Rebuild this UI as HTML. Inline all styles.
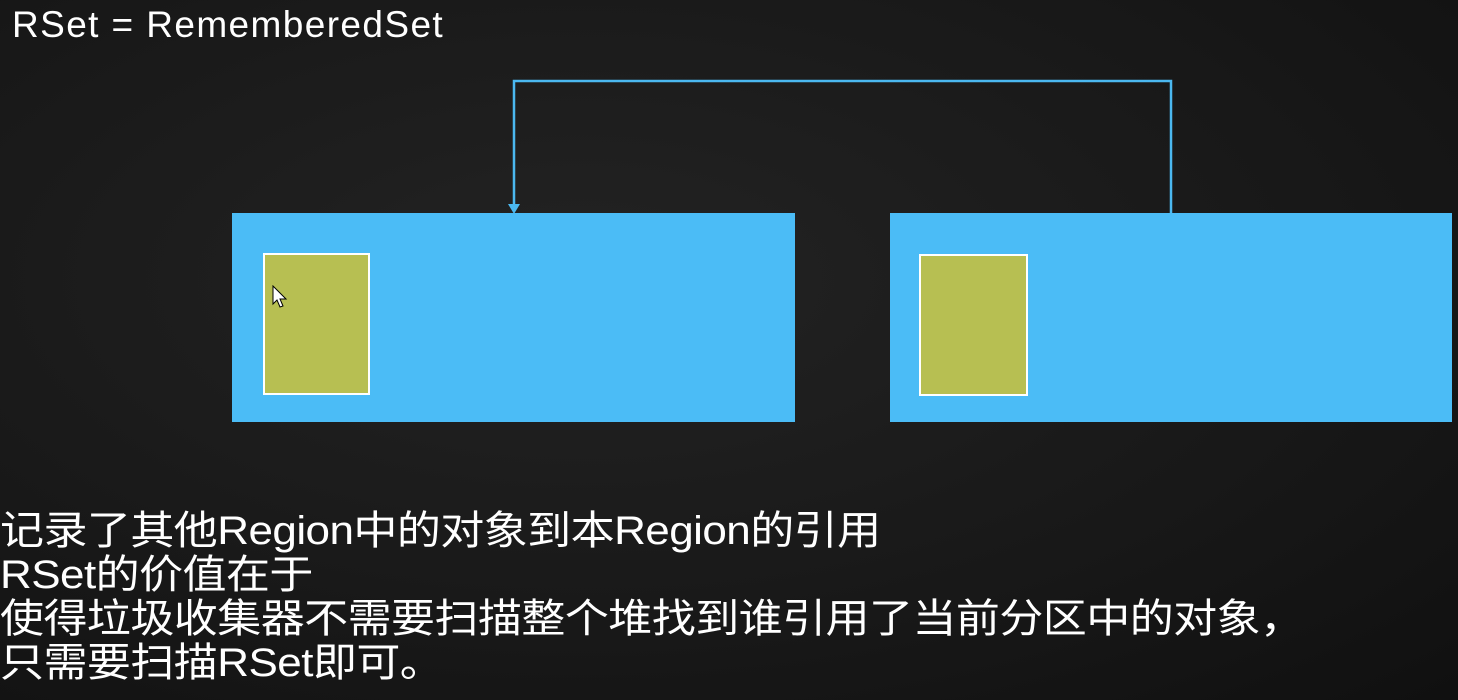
<!DOCTYPE html>
<html><head><meta charset="utf-8"><style>
html,body{margin:0;padding:0}
body{width:1458px;height:700px;overflow:hidden;position:relative;background:radial-gradient(ellipse at 40% 40%,#232323 0%,#181818 60%,#101010 100%);font-family:"Liberation Sans","Noto Sans CJK SC",sans-serif;color:#fff}
.t{position:absolute;left:12px;top:3px;font-size:37px;line-height:44px;white-space:nowrap;letter-spacing:1.4px}
.box{position:absolute;background:#4bbcf6;top:213px;height:209px}
.ol{position:absolute;background:#b7bf52;border:2px solid #fff;box-sizing:border-box}
.txt{position:absolute;left:0;top:509px;font-size:40px;line-height:44px;white-space:nowrap;letter-spacing:-0.5px}
.txt span{display:inline-block;transform-origin:0 0;transform:scaleX(1.1)}
</style></head><body>
<div class="t">RSet = RememberedSet</div>
<svg style="position:absolute;left:0;top:0" width="1458" height="700">
<polyline points="1171,213 1171,81 514,81 514,206" fill="none" stroke="#4bb8f0" stroke-width="2.5"/>
<polygon points="508,204 520,204 514,214" fill="#4bb8f0"/>
</svg>
<div class="box" style="left:232px;width:563px"></div>
<div class="box" style="left:890px;width:562px"></div>
<div class="ol" style="left:263px;top:253px;width:107px;height:142px"></div>
<div class="ol" style="left:919px;top:254px;width:109px;height:142px"></div>
<svg style="position:absolute;left:272px;top:285px" width="16" height="24"><polygon points="1,1 1,19 5,15 8,22 11,21 8,14 14,14" fill="#fff" stroke="#000" stroke-width="1"/></svg>
<div class="txt"><span>记录了其他Region中的对象到本Region的引用</span><br><span>RSet的价值在于</span><br><span>使得垃圾收集器不需要扫描整个堆找到谁引用了当前分区中的对象，</span><br><span>只需要扫描RSet即可。</span></div>
</body></html>
